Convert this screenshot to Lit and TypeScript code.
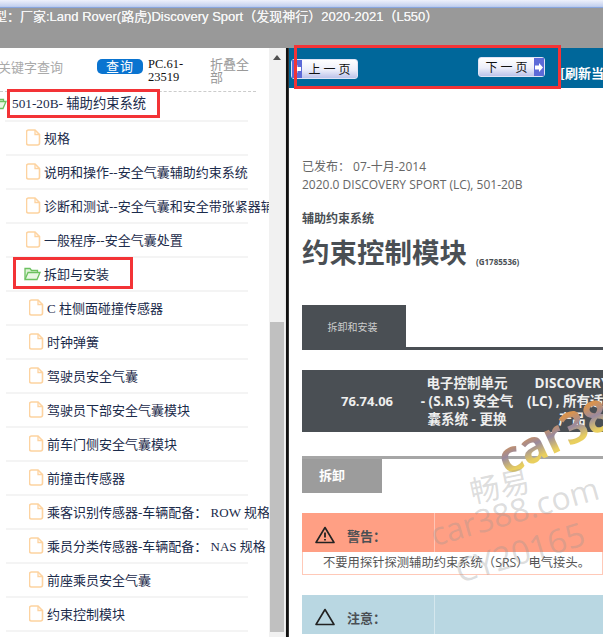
import type { TemplateResult } from 'lit';
import { css, html, LitElement, svg } from 'lit';
import { customElement } from 'lit/decorators.js';

const fileIcon = svg`<svg class="icon" width="15" height="17" viewBox="0 0 15 17">
  <path d="M2.5 1h6.5l4.5 4.5v8.5a2 2 0 0 1-2 2h-9a2 2 0 0 1-2-2v-11a2 2 0 0 1 2-2z" fill="#fff" stroke="#fdd3a0" stroke-width="1.6"/>
  <path d="M9 1v4.5h4.5" fill="none" stroke="#fdd3a0" stroke-width="1.3"/>
</svg>`;

const folderIcon = svg`<svg class="icon" width="17" height="15" viewBox="0 0 17 15">
  <path d="M1 13V2.5h5l1.5 2h6V7" fill="#dff3d8" stroke="#6cc160" stroke-width="1.3"/>
  <path d="M1 13.5L4 6.5h12l-3 7z" fill="#e9f7e4" stroke="#6cc160" stroke-width="1.3"/>
</svg>`;

const arrowLeft = svg`<svg width="7" height="8" viewBox="0 0 7 8"><path d="M0 4l3.5-4v2h3.500v4h-3.500v2z" fill="#fff"/></svg>`;
const arrowRight = svg`<svg width="8" height="9" viewBox="0 0 8 9"><path d="M8 4.500l-4-4.500v2.500h-4v4h4v2.500z" fill="#fff"/></svg>`;

const rows: { text: string; level: number }[] = [
  { text: '规格', level: 1 },
  { text: '说明和操作--安全气囊辅助约束系统', level: 1 },
  { text: '诊断和测试--安全气囊和安全带张紧器辅助约束', level: 1 },
  { text: '一般程序--安全气囊处置', level: 1 },
  { text: '拆卸与安装', level: 0 },
  { text: 'C 柱侧面碰撞传感器', level: 2 },
  { text: '时钟弹簧', level: 2 },
  { text: '驾驶员安全气囊', level: 2 },
  { text: '驾驶员下部安全气囊模块', level: 2 },
  { text: '前车门侧安全气囊模块', level: 2 },
  { text: '前撞击传感器', level: 2 },
  { text: '乘客识别传感器-车辆配备： ROW 规格', level: 2 },
  { text: '乘员分类传感器-车辆配备： NAS 规格', level: 2 },
  { text: '前座乘员安全气囊', level: 2 },
  { text: '约束控制模块', level: 2 },
];

@customElement('app-root')
export class AppRoot extends LitElement {
  public static styles = css`
    :host {
      position: relative;
      display: block;
      width: 603px;
      height: 637px;
      overflow: hidden;
      background: #fff;
      font-family: 'Liberation Serif', 'Noto Sans CJK SC', serif;
    }

    .chrome {
      height: 8px;
      background: linear-gradient(#eef1fb, #c3d0ee 80%, #6f93d6);
    }

    .title {
      box-sizing: border-box;
      height: 40px;
      padding-top: 1px;
      background: #999;
      color: #f4f4f4;
      font: 13px/16px 'Liberation Sans', 'Noto Sans CJK SC', sans-serif;
      text-shadow: 0 0 0.6px #fff;
      white-space: pre;
      overflow: hidden;
    }

    .title span {
      margin-left: -6px;
      display: inline-block;
    }

    .main {
      display: flex;
      height: 589px;
    }

    .left {
      width: 269px;
      flex: none;
      overflow: hidden;
    }

    .search {
      box-sizing: border-box;
      display: flex;
      align-items: flex-start;
      height: 44px;
      padding-top: 10px;
      width: 256px;
      border-bottom: 1px dashed #ccc;
    }

    .kw {
      width: 99px;
      margin-left: -2px;
      flex: none;
      font-size: 13px;
      line-height: 20px;
      color: #aaa;
    }

    .go {
      width: 46px;
      height: 15px;
      margin-top: 1px;
      flex: none;
      background: #0a74d0;
      border-radius: 5px;
      color: #fff;
      font-size: 13px;
      line-height: 15px;
      letter-spacing: 1px;
      text-align: center;
    }

    .code {
      width: 62px;
      margin-left: 5px;
      flex: none;
      font-size: 12.5px;
      line-height: 13px;
      color: #111;
    }

    .fold {
      width: 40px;
      flex: none;
      font-size: 13px;
      line-height: 13px;
      color: #999;
    }

    .row {
      box-sizing: border-box;
      display: flex;
      align-items: center;
      gap: 3px;
      height: 34px;
      padding-bottom: 2px;
      margin-left: 6px;
      width: 242px;
      border-bottom: 2px solid #f4f4f4;
      color: #1b2b4b;
      font-size: 13px;
      white-space: nowrap;
    }

    .row.root {
      height: 30px;
      margin-left: -10px;
      padding-bottom: 7px;
      width: 258px;
      gap: 5px;
      font-size: 13.3px;
      border-image: linear-gradient(90deg, transparent 16px, #f4f4f4 16px) 1;
    }

    .row.l0 {
      padding-left: 18px;
    }

    .row.l1 {
      padding-left: 20px;
    }

    .row.l2 {
      padding-left: 23px;
    }

    .icon {
      flex: none;
    }

    .bar {
      width: 16px;
      flex: none;
      background: #f1f1f1;
    }

    .up {
      width: 0;
      margin: 7px auto 0;
      border: 4px solid transparent;
      border-top: 0;
      border-bottom: 5px solid #505050;
    }

    .thumb {
      height: 310px;
      margin: 262px 1px 0 1px;
      background: #c0c0c0;
    }

    .split {
      width: 4px;
      flex: none;
      background: linear-gradient(90deg, #e8e8e8 25%, #111 25%, #111 75%, #555);
    }

    .doc {
      flex: 1;
      min-width: 0;
      overflow: hidden;
    }

    .nav {
      display: flex;
      align-items: flex-start;
      height: 40px;
      background: #00679a;
    }

    .btn {
      box-sizing: border-box;
      display: flex;
      align-items: center;
      flex: none;
      width: 67px;
      height: 20px;
      border: 1px solid #dfe3f5;
      border-radius: 3px;
      background: linear-gradient(#fff, #eceefa 55%, #bcc3ea);
      color: #111;
      font-size: 12px;
      white-space: pre;
    }

    .btn b {
      display: flex;
      align-items: center;
      justify-content: center;
      flex: none;
      width: 10px;
      align-self: stretch;
      background: #5c6ad8;
    }

    .btn span {
      flex: 1;
      text-align: center;
    }

    .prev {
      margin: 11px 0 0 2px;
    }

    .next {
      margin: 9px 0 0 120px;
    }

    .refresh {
      margin: 15px 0 0 15px;
      flex: none;
      color: #fff;
      font: bold 13px/20px 'Noto Sans CJK SC', sans-serif;
      white-space: nowrap;
    }

    .page {
      padding: 70px 0 0 13px;
      font-family: 'Open Sans', 'Noto Sans CJK SC', sans-serif;
      color: #666;
    }

    .meta {
      font-size: 12px;
      line-height: 18px;
    }

    .sub {
      margin-top: 17px;
      font-size: 12px;
      line-height: 16px;
      font-weight: 700;
      color: #4a4f54;
    }

    .head {
      display: flex;
      align-items: flex-end;
      gap: 9px;
      margin-top: 4px;
      height: 44px;
      color: #4a4f54;
      font-size: 27.5px;
      line-height: 44px;
      font-weight: 700;
    }

    .head small {
      font-size: 8px;
      line-height: 26px;
    }

    .tabs {
      margin-top: 30px;
      height: 45px;
      border-bottom: 3px solid #4a4f54;
      box-sizing: border-box;
    }

    .tab {
      box-sizing: border-box;
      width: 104px;
      height: 45px;
      padding-right: 3px;
      background: #4a4f54;
      color: #ccc;
      font-size: 10px;
      line-height: 45px;
      text-align: center;
    }

    .task {
      display: grid;
      grid-template-columns: 130px 70px 140px;
      align-items: center;
      width: 340px;
      height: 62px;
      margin-top: 20px;
      background: #4a4f54;
      color: #eee;
      font-size: 13.5px;
      line-height: 18px;
      font-weight: 700;
      text-align: center;
      white-space: nowrap;
    }

    .task .num {
      font-size: 13px;
    }

    .task .mid {
      display: flex;
      justify-content: center;
    }

    .section {
      height: 33px;
      margin-top: 24px;
      border-top: 3px solid #a6a6a6;
    }

    .section div {
      width: 80px;
      height: 34px;
      padding-left: 17px;
      box-sizing: border-box;
      background: #9c9c9c;
      color: #fff;
      font-size: 13px;
      line-height: 33px;
      font-weight: 700;
    }

    .notice {
      margin-top: 21px;
    }

    .notice header {
      box-sizing: border-box;
      display: flex;
      align-items: center;
      gap: 12px;
      height: 39px;
      padding: 5px 0 0 13px;
      background-image: linear-gradient(90deg, transparent 132px, rgba(255, 255, 255, 0.4) 132px, rgba(255, 255, 255, 0.4) 133px, transparent 133px);
      color: #4a4f54;
      font-size: 13px;
      font-weight: 700;
    }

    .warn header {
      background-color: #ff9f84;
    }

    .warn p {
      margin: 0;
      height: 22px;
      padding-left: 20px;
      border: 1px solid #ffc9b8;
      border-top: 0;
      color: #555;
      font-size: 12.3px;
      line-height: 22px;
      white-space: nowrap;
    }

    .notice.note {
      margin-top: 20px;
    }

    .note header {
      background-color: #b9d7e2;
    }

    .mark {
      position: absolute;
      white-space: nowrap;
      pointer-events: none;
      font-family: 'Open Sans', 'Noto Sans CJK SC', sans-serif;
      color: rgba(150, 150, 150, 0.32);
      transform-origin: left bottom;
    }

    .m1 {
      left: 437px;
      top: 512px;
      font-size: 32px;
      line-height: 44px;
      transform: rotate(-16deg);
    }

    .m2 {
      left: 462px;
      top: 551px;
      font-size: 33px;
      line-height: 40px;
      transform: rotate(-17deg);
    }

    .m3 {
      left: 474px;
      top: 474px;
      font-size: 30px;
      line-height: 36px;
      transform: rotate(-12deg);
    }

    .m4 {
      left: 510px;
      top: 433px;
      font-size: 44px;
      line-height: 50px;
      font-weight: 700;
      color: transparent;
      background: linear-gradient(#d8934f 25%, #9a8a9e 50%, #e9cf5e 78%);
      -webkit-background-clip: text;
      background-clip: text;
      transform: rotate(-25deg);
    }

    .red {
      position: absolute;
      box-sizing: border-box;
      border: 3px solid #f33336;
      pointer-events: none;
    }

    .r1 {
      left: 7px;
      top: 89px;
      width: 153px;
      height: 29px;
    }

    .r2 {
      left: 13px;
      top: 257px;
      width: 120px;
      height: 32px;
    }

    .r3 {
      left: 294px;
      top: 45px;
      width: 267px;
      height: 44px;
    }
  `;

  private renderRow(row: { text: string; level: number }) {
    return html`<div class="row l${row.level}">
      ${row.level === 0 ? folderIcon : fileIcon}<span>${row.text}</span>
    </div>`;
  }

  public render(): TemplateResult {
    return html`
      <div class="chrome"></div>
      <div class="title"><span>型：厂家:Land Rover(路虎)Discovery Sport（发现神行）2020-2021（L550）</span></div>
      <div class="main">
        <div class="left">
          <div class="search">
            <div class="kw">关键字查询</div>
            <div class="go">查询</div>
            <div class="code">PC.61-<br />23519</div>
            <div class="fold">折叠全部</div>
          </div>
          <div class="row root">${folderIcon}<span>501-20B- 辅助约束系统</span></div>
          ${rows.map((row) => this.renderRow(row))}
        </div>
        <div class="bar">
          <div class="up"></div>
          <div class="thumb"></div>
        </div>
        <div class="split"></div>
        <div class="doc">
          <div class="nav">
            <div class="btn prev"><b>${arrowLeft}</b><span>上 一 页</span></div>
            <div class="btn next"><span>下 一 页</span><b>${arrowRight}</b></div>
            <div class="refresh">[刷新当前页]</div>
          </div>
          <div class="page">
            <div class="meta">已发布： 07-十月-2014<br />2020.0 DISCOVERY SPORT (LC), 501-20B</div>
            <div class="sub">辅助约束系统</div>
            <div class="head">约束控制模块<small>(G1785536)</small></div>
            <div class="tabs"><div class="tab">拆卸和安装</div></div>
            <div class="task">
              <div class="num">76.74.06</div>
              <div class="mid"><div>电子控制单元<br />- (S.R.S) 安全气<br />囊系统 - 更换</div></div>
              <div>DISCOVERY<br />(LC) , 所有适用<br />产品</div>
            </div>
            <div class="section"><div>拆卸</div></div>
            <div class="notice warn">
              <header>
                <svg width="20" height="18" viewBox="0 0 20 18">
                  <path d="M10 1.500L19 16.500H1z" fill="none" stroke="#222" stroke-width="1.600" stroke-linejoin="round" />
                  <path d="M10 6.500v5M10 13v1.600" stroke="#222" stroke-width="1.800" />
                </svg>
                <span>警告：</span>
              </header>
              <p>不要用探针探测辅助约束系统（SRS）电气接头。</p>
            </div>
            <div class="notice note">
              <header>
                <svg width="20" height="18" viewBox="0 0 20 18">
                  <path d="M10 1.500L19 16.500H1z" fill="none" stroke="#222" stroke-width="1.600" stroke-linejoin="round" />
                </svg>
                <span>注意：</span>
              </header>
            </div>
          </div>
        </div>
      </div>
      <div class="mark m4">car388</div>
      <div class="mark m3">畅易</div>
      <div class="mark m1">car388.com</div>
      <div class="mark m2">CY20165</div>
      <div class="red r1"></div>
      <div class="red r2"></div>
      <div class="red r3"></div>
    `;
  }
}
